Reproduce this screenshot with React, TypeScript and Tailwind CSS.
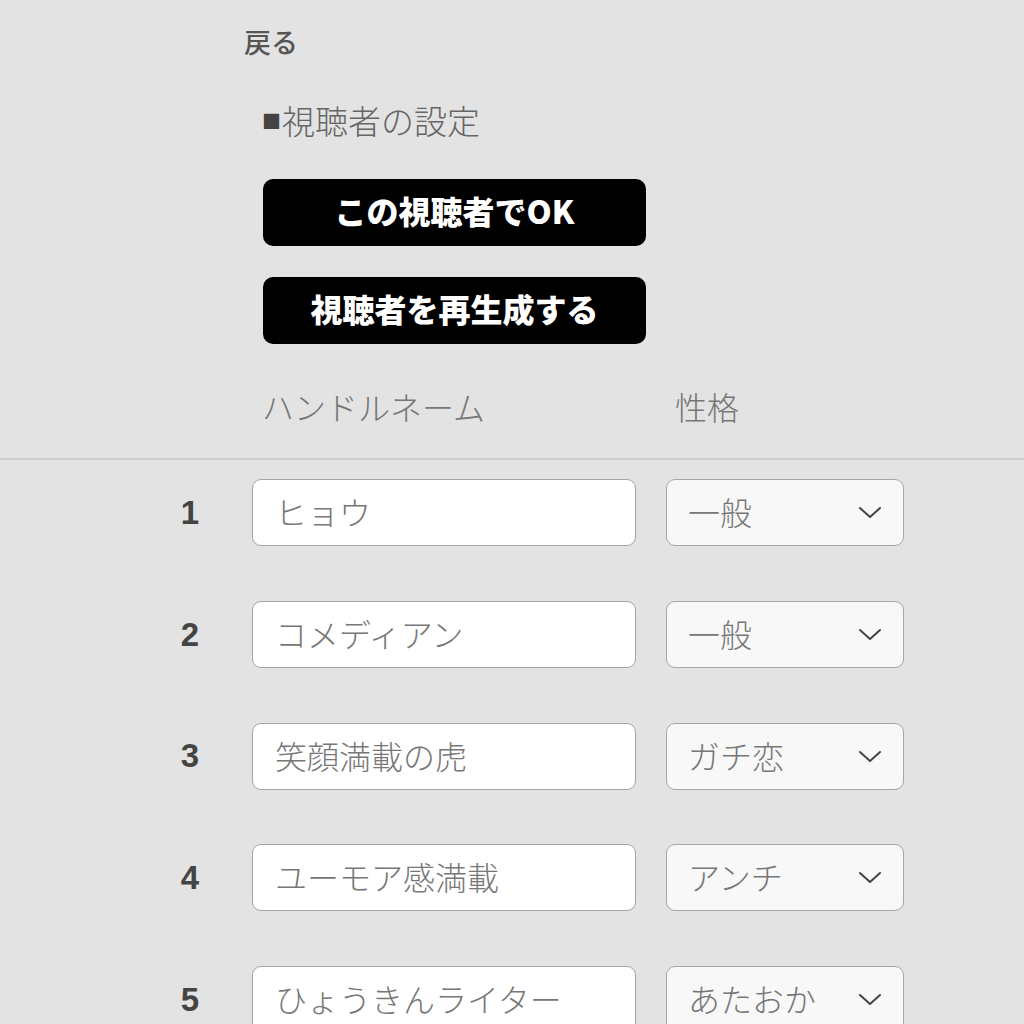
const rows = [
  { name: "ヒョウ", type: "一般" },
  { name: "コメディアン", type: "一般" },
  { name: "笑顔満載の虎", type: "ガチ恋" },
  { name: "ユーモア感満載", type: "アンチ" },
  { name: "ひょうきんライター", type: "あたおか" },
];

const jp = "font-['Noto_Sans_CJK_JP',sans-serif]";

function Chevron() {
  return (
    <svg width="24" height="13" viewBox="0 0 24 13" fill="none">
      <path d="M2 2 L12 11 L22 2" stroke="#444" strokeWidth="2" strokeLinecap="round" strokeLinejoin="round" />
    </svg>
  );
}

export default function App() {
  return (
    <div className={`min-h-screen w-full bg-[#e3e3e3] ${jp}`}>
      <div className="pt-[28px] pl-[244px]">
        <span className="text-[27px] leading-[27px] font-medium text-[#555]">戻る</span>
      </div>

      <div className="mt-[46px] ml-[262px] flex items-center h-[33px] text-[33px] leading-none font-light text-[#666]">
        <span className="text-[19px] text-[#444] mr-[1px]">■</span>
        <span>視聴者の設定</span>
      </div>

      <div className="ml-[263px] mt-[42px] flex flex-col gap-[31px]">
        <button className="w-[383px] h-[67px] pb-[5px] rounded-[10px] bg-black text-white text-[32px] font-black leading-none flex items-center justify-center">
          この視聴者でOK
        </button>
        <button className="w-[383px] h-[67px] pb-[5px] rounded-[10px] bg-black text-white text-[32px] font-black leading-none flex items-center justify-center">
          視聴者を再生成する
        </button>
      </div>

      <div className="mt-[46px] pb-[36px] ml-[252px] flex text-[32px] leading-none font-light text-[#777]">
        <div className="w-[414px] pl-[10px]">ハンドルネーム</div>
        <div className="pl-[9px]">性格</div>
      </div>

      <div className="h-[2px] w-full bg-[#cdcdcd]" />

      <div className="pt-[19px] flex flex-col gap-[54.75px]">
        {rows.map((r, i) => (
          <div key={i} className="ml-[160px] flex items-center">
            <div className="w-[60px] text-center font-['Liberation_Sans',sans-serif] font-bold text-[33px] text-[#444]">
              {i + 1}
            </div>
            <input
              readOnly
              value={r.name}
              className="ml-[32px] w-[384px] h-[67px] pb-[3px] rounded-[9px] border border-[#a6a6a6] bg-white pl-[22px] text-[32px] font-light text-[#777] outline-none"
            />
            <div className="ml-[30px] w-[238px] h-[67px] rounded-[9px] border border-[#a6a6a6] bg-[#f8f8f8] pl-[21px] pr-[21px] flex items-center justify-between text-[32px] font-light text-[#777]">
              <span className="pb-[3px]">{r.type}</span>
              <Chevron />
            </div>
          </div>
        ))}
      </div>
    </div>
  );
}
